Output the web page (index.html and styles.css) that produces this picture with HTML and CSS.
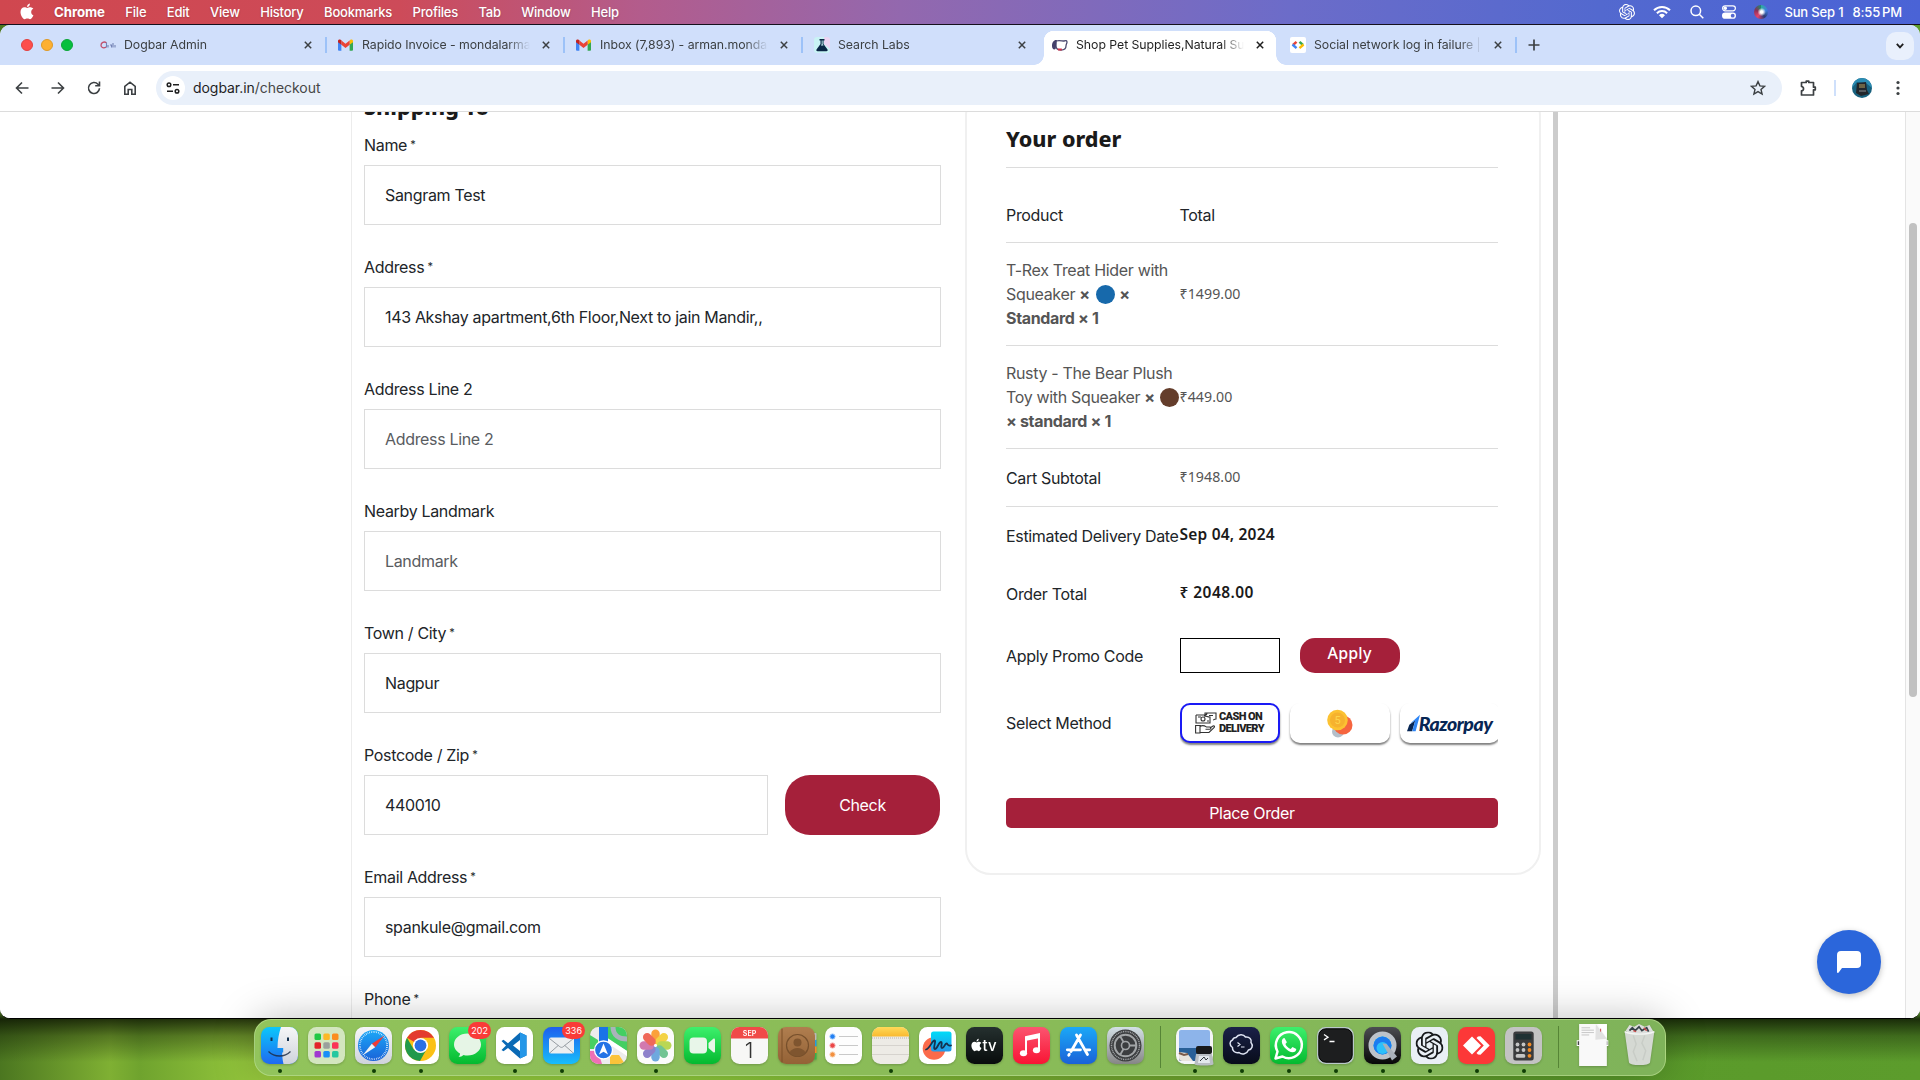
FILE: index.html
```html
<!DOCTYPE html>
<html lang="en">
<head>
<meta charset="utf-8">
<title>Shop Pet Supplies,Natural Supplements</title>
<link rel="stylesheet" href="styles.css">
</head>
<body>
<svg class="defs" width="0" height="0" aria-hidden="true">
  <defs>
    <linearGradient id="g-finder" x1="0" y1="0" x2="0" y2="1"><stop offset="0" stop-color="#0bc7fb"/><stop offset="1" stop-color="#1f6af0"/></linearGradient>
    <linearGradient id="g-white" x1="0" y1="0" x2="0" y2="1"><stop offset="0" stop-color="#f6f6f8"/><stop offset="1" stop-color="#cfd3dc"/></linearGradient>
    <linearGradient id="g-blue" x1="0" y1="0" x2="0" y2="1"><stop offset="0" stop-color="#1ba8f7"/><stop offset="1" stop-color="#1a62d8"/></linearGradient>
    <linearGradient id="g-mail" x1="0" y1="0" x2="0" y2="1"><stop offset="0" stop-color="#1e5fee"/><stop offset="1" stop-color="#18bdfb"/></linearGradient>
    <linearGradient id="g-green" x1="0" y1="0" x2="0" y2="1"><stop offset="0" stop-color="#3df06c"/><stop offset="1" stop-color="#04b92f"/></linearGradient>
    <linearGradient id="g-red" x1="0" y1="0" x2="0" y2="1"><stop offset="0" stop-color="#fb5570"/><stop offset="1" stop-color="#f91434"/></linearGradient>
    <linearGradient id="g-brown" x1="0" y1="0" x2="0" y2="1"><stop offset="0" stop-color="#b07e4f"/><stop offset="1" stop-color="#946236"/></linearGradient>
    <linearGradient id="g-yellow" x1="0" y1="0" x2="0" y2="1"><stop offset="0" stop-color="#ffda58"/><stop offset="1" stop-color="#f9b930"/></linearGradient>
    <linearGradient id="g-cyan" x1="0" y1="0" x2="0" y2="1"><stop offset="0" stop-color="#00dcf8"/><stop offset="1" stop-color="#2497e8"/></linearGradient>
    <linearGradient id="g-dark" x1="0" y1="0" x2="0" y2="1"><stop offset="0" stop-color="#25302f"/><stop offset="1" stop-color="#080c0c"/></linearGradient>
    <linearGradient id="g-navy" x1="0" y1="0" x2="0" y2="1"><stop offset="0" stop-color="#1a2148"/><stop offset="1" stop-color="#080c1a"/></linearGradient>
    <linearGradient id="g-steel" x1="0" y1="0" x2="0" y2="1"><stop offset="0" stop-color="#d3e0e6"/><stop offset="1" stop-color="#868686"/></linearGradient>
    <linearGradient id="g-qt" x1="0" y1="0" x2="0" y2="1"><stop offset="0" stop-color="#4c4d52"/><stop offset="1" stop-color="#070708"/></linearGradient>
    <symbol id="apple" viewBox="0 0 14 17"><path fill="#fff" d="M10.1 4.3c-1.200 0-2 .7-2.800.7-.8 0-1.700-.7-2.800-.7C2.300 4.300.5 6 .5 9.100c0 3.500 2.400 7.100 4.100 7.100 1 0 1.500-.7 2.800-.7s1.700.7 2.700.7c1.400 0 2.700-2.200 3.300-3.900-3-1.200-2.800-5.300-.1-6.500-.8-1-2-1.500-3.200-1.500zM9.900.4C8.200.7 6.900 2.200 7.100 4 8.700 4 10.100 2.300 9.900.4z"/></symbol>
    <symbol id="x" viewBox="0 0 8 8"><path d="M.8.8l6.400 6.400M7.200.8L.8 7.200" stroke="currentColor" stroke-width="1.500" fill="none"/></symbol>
    <symbol id="gmail" viewBox="0 0 16 12"><path fill="#4285f4" d="M0 1.500V11a1 1 0 0 0 1 1h2.600V4.800z"/><path fill="#34a853" d="M12.400 12H15a1 1 0 0 0 1-1V1.500l-3.600 3z"/><path fill="#fbbc04" d="M12.400 1.200v4.600L16 3V1.600C16 .2 14.300-.5 13.200.5z"/><path fill="#ea4335" d="M3.600 5.800V1.200L8 4.600l4.400-3.400v4.600L8 9.200z"/><path fill="#c5221f" d="M0 1.600V3l3.600 2.800V1.200L2.800.5C1.700-.4 0 .2 0 1.600z"/></symbol>
    <symbol id="knot" viewBox="0 0 24 24"><path fill="currentColor" d="M22.2819 9.8211a5.9847 5.9847 0 0 0-.5157-4.9108 6.0462 6.0462 0 0 0-6.5098-2.9A6.0651 6.0651 0 0 0 4.9807 4.1818a5.9847 5.9847 0 0 0-3.9977 2.9 6.0462 6.0462 0 0 0 .7427 7.0966 5.98 5.98 0 0 0 .511 4.9107 6.051 6.051 0 0 0 6.5146 2.9001A5.9847 5.9847 0 0 0 13.2599 24a6.0557 6.0557 0 0 0 5.7718-4.2058 5.9894 5.9894 0 0 0 3.9977-2.9001 6.0557 6.0557 0 0 0-.7475-7.0729zm-9.022 12.6081a4.4755 4.4755 0 0 1-2.8764-1.0408l.1419-.0804 4.7783-2.7582a.7948.7948 0 0 0 .3927-.6813v-6.7369l2.02 1.1686a.071.071 0 0 1 .038.052v5.5826a4.504 4.504 0 0 1-4.4945 4.4944zm-9.6607-4.1254a4.4708 4.4708 0 0 1-.5346-3.0137l.142.0852 4.783 2.7582a.7712.7712 0 0 0 .7806 0l5.8428-3.3685v2.3324a.0804.0804 0 0 1-.0332.0615L9.74 19.9502a4.4992 4.4992 0 0 1-6.1408-1.6464zM2.3408 7.8956a4.485 4.485 0 0 1 2.3655-1.9728V11.6a.7664.7664 0 0 0 .3879.6765l5.8144 3.3543-2.0201 1.1685a.0757.0757 0 0 1-.071 0l-4.8303-2.7865A4.504 4.504 0 0 1 2.3408 7.872zm16.5963 3.8558L13.1038 8.364 15.1192 7.2a.0757.0757 0 0 1 .071 0l4.8303 2.7913a4.4944 4.4944 0 0 1-.6765 8.1042v-5.6772a.79.79 0 0 0-.407-.667zm2.0107-3.0231l-.142-.0852-4.7735-2.7818a.7759.7759 0 0 0-.7854 0L9.409 9.2297V6.8974a.0662.0662 0 0 1 .0284-.0615l4.8303-2.7866a4.4992 4.4992 0 0 1 6.6802 4.66zM8.3065 12.863l-2.02-1.1638a.0804.0804 0 0 1-.038-.0567V6.0742a4.4992 4.4992 0 0 1 7.3757-3.4537l-.142.0805L8.704 5.459a.7948.7948 0 0 0-.3927.6813zm1.0976-2.3654l2.602-1.4998 2.6069 1.4998v2.9994l-2.5974 1.4997-2.6067-1.4997Z"/></symbol>
  </defs>
</svg>

<header class="menubar">
  <svg class="menubar-apple" width="14" height="17"><use href="#apple"/></svg>
  <nav class="menus"><b>Chrome</b><span>File</span><span>Edit</span><span>View</span><span>History</span><span>Bookmarks</span><span>Profiles</span><span>Tab</span><span>Window</span><span>Help</span></nav>
  <div class="status">
    <svg width="16" height="16"><use href="#knot"/></svg>
    <svg width="18" height="14" viewBox="0 0 18 14"><g fill="none" stroke="#fff" stroke-width="2"><path d="M1 5.200a11.500 11.500 0 0 1 16 0M3.900 8.200a7.300 7.300 0 0 1 10.200 0"/></g><path fill="#fff" d="M9 13.300L6 10.300a4.300 4.300 0 0 1 6 0z"/></svg>
    <svg width="14" height="14" viewBox="0 0 14 14"><g fill="none" stroke="#fff" stroke-width="1.500"><circle cx="5.800" cy="5.800" r="4.800"/><path d="M9.300 9.300l4 4"/></g></svg>
    <svg width="14" height="14" viewBox="0 0 14 14"><rect x=".6" y=".8" width="12.800" height="5" rx="2.500" fill="none" stroke="#fff" stroke-width="1.200"/><circle cx="3.300" cy="3.300" r="1.700" fill="#fff"/><rect y="7.600" width="14" height="6.200" rx="3.100" fill="#fff"/><circle cx="10.700" cy="10.700" r="1.900" fill="#5568cf"/></svg>
    <span class="siri"></span>
    <span class="clock">Sun Sep 1<i class="gap"></i>8:55<i></i>PM</span>
  </div>
</header>

<main class="window">
  <div class="tabstrip">
    <div class="lights"><i class="red"></i><i class="amber"></i><i class="green"></i></div>
    <div class="tab">
      <span class="fav"><svg width="16" height="8" viewBox="0 0 16 8"><path d="M6.500 1.800C4 0 1 1.500 1 4.200 1 7 4 7.500 6 6" fill="none" stroke="#c0506c" stroke-width="1.300"/><path d="M6.500 1.500v5M8 4v2.500M10 4h1.500v2.500M13 2v4.500M15 4v2.500" stroke="#7483b5" stroke-width="1.100" fill="none"/></svg></span>
      <span class="title">Dogbar Admin</span><svg class="close"><use href="#x"/></svg></div>
    <div class="tab"><span class="fav"><svg width="15" height="12"><use href="#gmail"/></svg></span><span class="title">Rapido Invoice - mondalarman</span><svg class="close"><use href="#x"/></svg></div>
    <div class="tab"><span class="fav"><svg width="15" height="12"><use href="#gmail"/></svg></span><span class="title">Inbox (7,893) - arman.mondal</span><svg class="close"><use href="#x"/></svg></div>
    <div class="tab last"><span class="fav"><svg width="16" height="16" viewBox="0 0 16 16"><rect width="16" height="16" rx="3" fill="#c9f3f5"/><path d="M10 0h3a3 3 0 0 1 3 3v9l-6-5z" fill="#ecd4f3"/><path d="M5.500 2h5v1.500h-1V7l4 5.500c.5 1-.1 1.700-1 1.700h-9c-.9 0-1.500-.7-1-1.700L6.500 7V3.500h-1z" fill="#0b2746"/><path d="M7.700 3.500h.9v3.700l1 1.400H6.800l.9-1.400z" fill="#c9f3f5"/></svg></span><span class="title">Search Labs</span><svg class="close"><use href="#x"/></svg></div>
    <div class="tab active"><span class="fav"><svg width="16" height="12" viewBox="0 0 16 12"><path d="M4 2c3-1 6 0 8 0 2-.5 3-.5 3 1s-1 2-1 4c0 2.500-2 4-5 4S4 10 4 7z" fill="#fff" stroke="#4b4a70" stroke-width="1.300"/><path d="M5 1C2 .5 0 3 0 7c0 3 2 4 3.500 3C4.500 9 3.500 4 5 1z" fill="#45416b"/><path d="M5.500 9.500h4.300V11.500H6z" fill="#d63047"/></svg></span><span class="title">Shop Pet Supplies,Natural Supp</span><svg class="close"><use href="#x"/></svg></div>
    <div class="tab"><span class="fav"><svg width="16" height="16" viewBox="0 0 16 16"><rect width="16" height="16" rx="2" fill="#fff"/><g fill="none" stroke-width="2.400"><path d="M6.500 4.800L3 8" stroke="#ea4335"/><path d="M2.500 7.500l4 3.700" stroke="#4285f4"/><path d="M9.500 4.800L13 8" stroke="#34a853"/><path d="M13.500 7.500l-4 3.700" stroke="#fbbc04"/></g></svg></span><span class="title">Social network log in failure | G</span><svg class="close"><use href="#x"/></svg></div>
    <svg class="newtab" width="12" height="12" viewBox="0 0 12 12"><path d="M6 .5v11M.5 6h11" stroke="#3c4043" stroke-width="1.700"/></svg>
    <span class="tabsearch"><svg width="8" height="6" viewBox="0 0 8 6"><path d="M.8.800L4 4.300 7.200.8" fill="none" stroke="#1f1f1f" stroke-width="1.800"/></svg></span>
  </div>

  <div class="toolbar">
    <div class="nav">
      <svg viewBox="0 0 16 16"><path d="M14.500 8H3M8 2.500L2.500 8 8 13.500"/></svg>
      <svg viewBox="0 0 16 16"><path d="M1.500 8H13M8 2.500L13.500 8 8 13.500"/></svg>
      <svg viewBox="0 0 16 16"><path d="M13.500 8.300A5.500 5.500 0 1 1 12 4.200l1.500 1.500M13.500 1.500v4.300H9.200"/></svg>
      <svg viewBox="0 0 16 16"><path d="M2.800 14.200V6.300L8 2.200l5.200 4.100v7.900H9.800V9.500H6.200v4.700z"/></svg>
    </div>
    <div class="omnibox">
      <span class="site"><svg width="14" height="12" viewBox="0 0 14 12"><g fill="none" stroke="#1f1f1f" stroke-width="1.500"><circle cx="3" cy="2.800" r="1.800"/><path d="M7 2.800h6M1 9.200h6"/><circle cx="11" cy="9.200" r="1.800"/></g></svg></span>
      <span class="url">dogbar.in<em>/checkout</em></span>
      <svg class="star" width="16" height="16" viewBox="0 0 16 16"><path d="M8 1.600l1.900 4.300 4.700.4-3.600 3.100 1.100 4.600L8 11.600 3.900 14 5 9.400 1.400 6.300l4.700-.4z" fill="none" stroke="#3c4043" stroke-width="1.400"/></svg>
    </div>
    <svg class="ext" width="17" height="18" viewBox="0 0 17 18"><path d="M1.500 3.500h4.700v-1.300h2.600v1.300h4.700v4.700h1.800v2.600h-1.800v5.200h-12v-4.200c2.700-.4 2.700-3.900 0-4.300z" fill="none" stroke="#3c4043" stroke-width="1.700" stroke-linejoin="round"/></svg>
    <i class="sep"></i>
    <svg class="avatar" width="20" height="20" viewBox="0 0 20 20"><circle cx="10" cy="10" r="10" fill="#17607d"/><path d="M0 10A10 10 0 0 1 20 10L14 5 5 4z" fill="#2b8cb3"/><path d="M5 5l9-1 1 8 2 4-8 2-5-3z" fill="#22262b"/><path d="M7 7h6M7 9h6" stroke="#b6a05e"/><path d="M7 13h7" stroke="#8b9095"/></svg>
    <svg class="dots" width="4" height="16" viewBox="0 0 4 16"><g fill="#3c4043"><circle cx="2" cy="2.500" r="1.600"/><circle cx="2" cy="8" r="1.600"/><circle cx="2" cy="13.500" r="1.600"/></g></svg>
  </div>

  <div class="viewport">
    <div class="page">
      <section class="shipping">
        <h2>Shipping To</h2>
        <div class="field"><label>Name <sup>*</sup></label><div class="input">Sangram Test</div></div>
        <div class="field"><label>Address <sup>*</sup></label><div class="input">143 Akshay apartment,6th Floor,Next to jain Mandir,,</div></div>
        <div class="field"><label>Address Line 2</label><div class="input hint">Address Line 2</div></div>
        <div class="field"><label>Nearby Landmark</label><div class="input hint">Landmark</div></div>
        <div class="field"><label>Town / City <sup>*</sup></label><div class="input">Nagpur</div></div>
        <div class="field"><label>Postcode / Zip <sup>*</sup></label><div class="zip"><div class="input">440010</div><div class="check">Check</div></div></div>
        <div class="field"><label>Email Address <sup>*</sup></label><div class="input">spankule@gmail.com</div></div>
        <div class="field"><label>Phone <sup>*</sup></label><div class="input"></div></div>
      </section>

      <section class="order">
        <h2>Your order</h2>
        <div class="row head"><span>Product</span><span>Total</span></div>
        <div class="row item"><span>T-Rex Treat Hider with<br>Squeaker <b>×</b> <i class="swatch blue"></i> <b>×<br>Standard × 1</b></span><span class="price">₹1499.00</span></div>
        <div class="row item"><span>Rusty - The Bear Plush<br>Toy with Squeaker <b>×</b> <i class="swatch brown"></i><br><b>× standard × 1</b></span><span class="price">₹449.00</span></div>
        <div class="row subtotal"><span>Cart Subtotal</span><span class="price">₹1948.00</span></div>
        <div class="row plain"><span>Estimated Delivery Date</span><strong>Sep 04, 2024</strong></div>
        <div class="row plain"><span>Order Total</span><strong class="total">₹ 2048.00</strong></div>
        <div class="row promo"><span>Apply Promo Code</span><div class="promo-form"><div class="promo-input"></div><div class="apply">Apply</div></div></div>
        <div class="row method"><span>Select Method</span>
          <div class="methods">
            <div class="pay selected">
              <svg width="22" height="22" viewBox="0 0 22 22"><g fill="none" stroke="#333" stroke-width="1.100"><path d="M10 4V1h11v6c-2 0-2 1-3 1M12 1c0 2-1 2-2 2M1 3h9M1 3v8h14V5c-3 0-3-1-6-1"/><path d="M3 5h3M12 9h2M14 3.500h4"/><circle cx="8" cy="7" r="2"/><path d="M.6 13.500H5v7.500H.6zM5 14.500c3-2 5-.5 6.500.5h3.500c1.500.5 1 2.300-.5 2.300h-4M15 16l3-2c1.500-.5 2 .7 1 1.700L14 20.500H5"/></g></svg>
              <span class="cod">CASH ON<br>DELIVERY</span>
            </div>
            <div class="pay"><svg width="26" height="30" viewBox="0 0 26 30"><circle cx="11" cy="23.500" r="6" fill="#b5bfca"/><circle cx="16" cy="17" r="9.500" fill="#f6653f"/><circle cx="10.500" cy="12" r="10.300" fill="#fcc232"/><circle cx="10.500" cy="12" r="7.500" fill="#f6b22e"/><text x="10.500" y="16" text-anchor="middle" font-family="Roboto,sans-serif" font-size="11" fill="#fdd54c">5</text></svg></div>
            <div class="pay razor"><svg width="13" height="18" viewBox="0 0 14 18"><path d="M0 18L2.500 11 9 6 5.500 18z" fill="#072654"/><path d="M3.500 9.500L14 0 9.300 18H5.700L8.800 6.500z" fill="#2f86f6"/></svg><span>Razorpay</span></div>
          </div>
        </div>
        <div class="place">Place Order</div>
      </section>
    </div>
    <div class="chat"><svg width="24" height="22" viewBox="0 0 24 22"><path d="M4 0h16a4 4 0 0 1 4 4v9a4 4 0 0 1-4 4H5l-3.300 4.500C1 22.300 0 22 0 21V4a4 4 0 0 1 4-4z" fill="#fff"/></svg></div>
    <div class="scrollbar"><i></i></div>
  </div>
</main>

<footer class="dock">
  <div class="app on"><svg viewBox="0 0 37 37"><rect width="37" height="37" rx="8.500" fill="url(#g-finder)"/><path d="M20 0h8.500A8.500 8.500 0 0 1 37 8.500v20A8.500 8.500 0 0 1 28.500 37H22.500c-1-4-1.300-8-1.300-11.500h1V21H16.500C16.500 13 18 6 20 0z" fill="url(#g-white)"/><path d="M10.500 10.500v3.500M27 10.500v3.500" stroke="#14304e" stroke-width="2"/><path d="M7.500 24.500c6 6 16 6 22 0" fill="none" stroke="#1d2c45" stroke-width="1.300" stroke-opacity=".85"/></svg></div>
  <div class="app"><svg viewBox="0 0 37 37"><rect width="37" height="37" rx="8.500" fill="#d3e6bf"/><g><rect x="6.500" y="6.500" width="6.500" height="6.500" rx="1.500" fill="#22c745"/><rect x="15.300" y="6.500" width="6.500" height="6.500" rx="1.500" fill="#fcb827"/><rect x="24" y="6.500" width="6.500" height="6.500" rx="1.500" fill="#fb8c1e"/><rect x="6.500" y="15.300" width="6.500" height="6.500" rx="1.500" fill="#e3232a"/><rect x="15.300" y="15.300" width="6.500" height="6.500" rx="1.500" fill="#9aa09c"/><rect x="24" y="15.300" width="6.500" height="6.500" rx="1.500" fill="#fb3556"/><rect x="6.500" y="24" width="6.500" height="6.500" rx="1.500" fill="#a03ad0"/><rect x="15.300" y="24" width="6.500" height="6.500" rx="1.500" fill="#188ef7"/><rect x="24" y="24" width="6.500" height="6.500" rx="1.500" fill="#24c8a0"/></g></svg></div>
  <div class="app on"><svg viewBox="0 0 37 37"><rect width="37" height="37" rx="8.500" fill="url(#g-white)"/><circle cx="18.500" cy="18.500" r="15.500" fill="url(#g-blue)"/><circle cx="18.500" cy="18.500" r="13.600" fill="none" stroke="#fff" stroke-width="1.800" stroke-dasharray=".6 1.200"/><path d="M29.500 8.500L16.800 16.800l3.400 3.400z" fill="#f03b35"/><path d="M7.500 28.500l9.300-11.700 3.400 3.400z" fill="#f3f3f3"/></svg></div>
  <div class="app on"><svg viewBox="0 0 37 37"><rect width="37" height="37" rx="8.500" fill="#fff"/><circle cx="18.500" cy="18.500" r="15.500" fill="#fbc116"/><path d="M18.500 18.500L5 10.800A15.500 15.500 0 0 1 32 10.800H18.500z" fill="#e33b2e"/><path d="M5 10.800A15.500 15.500 0 0 0 18 34l6.700-11.900-12.900.3z" fill="#21994b"/><circle cx="18.500" cy="18.500" r="7.600" fill="#fff"/><circle cx="18.500" cy="18.500" r="5.900" fill="#2a6fe3"/></svg></div>
  <div class="app"><svg viewBox="0 0 37 37"><rect width="37" height="37" rx="8.500" fill="url(#g-green)"/><path d="M18.500 6.500c7.500 0 13.500 4.700 13.500 11s-6 11-13.500 11c-1.400 0-2.700-.1-4-.5-1.200 1.200-3 2-5 2 1-1 1.600-2.300 1.500-3.500C7.500 24.500 5 21.300 5 17.500c0-6.300 6-11 13.500-11z" fill="#e6f5e6"/></svg><em>202</em></div>
  <div class="app on"><svg viewBox="0 0 37 37"><rect width="37" height="37" rx="8.500" fill="#fff"/><path d="M24 5.500L12 16.200 7.500 12.800 5.500 14l4.500 4.500L5.500 23l2 1.300 4.500-3.400L24 31.500l6.500-3v-20zM24 13v11l-7-5.500z" fill="#0a6ab6" fill-rule="evenodd"/><path d="M24 5.500v26l6.500-3v-20z" fill="#2597e8"/></svg></div>
  <div class="app on"><svg viewBox="0 0 37 37"><rect width="37" height="37" rx="8.500" fill="url(#g-mail)"/><rect x="6" y="10.500" width="25" height="16" rx="2" fill="#eceef0"/><path d="M6.500 11.500l10.300 8.200c1.200.9 2.300.9 3.400 0l10.300-8.200M6.700 26l8.500-7.500M30.300 26l-8.500-7.500" fill="none" stroke="#8c9298" stroke-width=".9"/></svg><em>336</em></div>
  <div class="app"><svg viewBox="0 0 37 37"><clipPath id="mapc"><rect width="37" height="37" rx="8.500"/></clipPath><g clip-path="url(#mapc)"><path fill="#ececec" d="M0 0h37v37H0z"/><path d="M18 0h19v24L18 12z" fill="#43cf62"/><path d="M0 8l8 5v9H0z" fill="#47cf63"/><path d="M0 24h8l4 13H0z" fill="#ee70b5"/><path d="M20 28l9 0 6 9H20z" fill="#fbc33a"/><path d="M23 0c0 8 6 12 14 12" fill="none" stroke="#a9b3ba" stroke-width="5"/><path d="M16 10l21 14v5L16 15z" fill="#fff"/><path d="M9 0h9v18H9z" fill="#1a74e8"/></g><circle cx="13.500" cy="23" r="9" fill="#2373e6" stroke="#fff" stroke-width="1.300"/><path d="M13.500 16.500l4.500 11-4.500-2.700L9 27.500z" fill="#fff"/></svg></div>
  <div class="app on"><svg viewBox="0 0 37 37"><rect width="37" height="37" rx="8.500" fill="#fbfbfb"/><g opacity=".92"><rect x="14.300" y="2.500" width="8.400" height="14.500" rx="4.200" fill="#fb9a2b"/><rect x="14.300" y="2.500" width="8.400" height="14.500" rx="4.200" fill="#f3cf35" transform="rotate(45 18.500 18.500)"/><rect x="14.300" y="2.500" width="8.400" height="14.500" rx="4.200" fill="#b5d446" transform="rotate(90 18.500 18.500)"/><rect x="14.300" y="2.500" width="8.400" height="14.500" rx="4.200" fill="#67c08c" transform="rotate(135 18.500 18.500)"/><rect x="14.300" y="2.500" width="8.400" height="14.500" rx="4.200" fill="#63a2dc" transform="rotate(180 18.500 18.500)"/><rect x="14.300" y="2.500" width="8.400" height="14.500" rx="4.200" fill="#8577c8" transform="rotate(225 18.500 18.500)"/><rect x="14.300" y="2.500" width="8.400" height="14.500" rx="4.200" fill="#cf6fa8" transform="rotate(270 18.500 18.500)"/><rect x="14.300" y="2.500" width="8.400" height="14.500" rx="4.200" fill="#ef5c4c" transform="rotate(315 18.500 18.500)"/></g></svg></div>
  <div class="app"><svg viewBox="0 0 37 37"><rect width="37" height="37" rx="8.500" fill="url(#g-green)"/><rect x="5.500" y="10.500" width="17.500" height="16" rx="4" fill="#e8f6e9"/><path d="M24.500 16l4.800-4.200c.9-.7 1.700-.3 1.700.7v12c0 1-.8 1.400-1.700.7L24.500 21z" fill="#e8f6e9"/></svg></div>
  <div class="app"><svg viewBox="0 0 37 37"><rect width="37" height="37" rx="8.500" fill="#f7f7f6"/><path d="M0 11.500v-3A8.500 8.500 0 0 1 8.500 0h20A8.500 8.500 0 0 1 37 8.500v3z" fill="#f04a48"/><text x="18.500" y="8.800" text-anchor="middle" font-family="Inter,sans-serif" font-weight="600" font-size="7" fill="#fff">SEP</text><text x="18" y="30.500" text-anchor="middle" font-family="Inter,sans-serif" font-weight="300" font-size="22" fill="#333">1</text></svg></div>
  <div class="app"><svg viewBox="0 0 37 37"><rect x="30" y="6" width="8.500" height="7" rx="1" fill="#b9b9b9"/><rect x="30" y="13" width="8.500" height="6.500" fill="#249de0"/><rect x="30" y="19.500" width="8.500" height="6.500" fill="#f38b25"/><rect x="30" y="26" width="8.500" height="6.500" fill="#38b24a"/><rect width="37" height="37" rx="8.500" fill="url(#g-brown)"/><path d="M4 1.500v34" stroke="#7c5028" stroke-width="1"/><g fill="none" stroke="#77502c" stroke-width="1.200"><circle cx="19.500" cy="18.500" r="11"/></g><circle cx="19.500" cy="15.500" r="4" fill="#7f552f"/><path d="M11.500 25.500c3-6 13-6 16 0-4 5-12 5-16 0z" fill="#7f552f"/></svg></div>
  <div class="app"><svg viewBox="0 0 37 37"><rect width="37" height="37" rx="8.500" fill="#fdfdfd"/><g stroke="#c9c9c9"><path d="M14 9.500h19M14 18.500h19M14 27.500h19"/></g><g stroke-width="1" fill-opacity=".95"><circle cx="7.500" cy="9.500" r="2.600" fill="#1679f2" stroke="#9cc6fa"/><circle cx="7.500" cy="18.500" r="2.600" fill="#ea3c3c" stroke="#f5aaaa"/><circle cx="7.500" cy="27.500" r="2.600" fill="#f28a35" stroke="#f9cfab"/></g></svg></div>
  <div class="app on"><svg viewBox="0 0 37 37"><rect width="37" height="37" rx="8.500" fill="#edebe6"/><path d="M0 9.500v-1A8.500 8.500 0 0 1 8.500 0h20A8.500 8.500 0 0 1 37 8.500v1z" fill="url(#g-yellow)"/><path d="M0 11h37" stroke="#a9a69e" stroke-dasharray="1 1" stroke-width=".8"/><path d="M0 18.500h37M0 27.500h37" stroke="#cfcdc8" stroke-width=".8"/></svg></div>
  <div class="app"><svg viewBox="0 0 37 37"><rect width="37" height="37" rx="8.500" fill="#fff"/><circle cx="15" cy="21.500" r="11.300" fill="#fb6a4b"/><rect x="12" y="4.500" width="20.500" height="20" rx="2.500" fill="url(#g-cyan)"/><path d="M7 22.500c4-1 6-9 8.500-9 2 0-2 8.500.5 8.500s3.500-7 6-7c2 0-1 6 1 6 2.500 0 2.500-4.500 4.500-4.500 1.500 0 .5 3 4.500 2" fill="none" stroke="#15314f" stroke-width="1.800" stroke-linecap="round"/></svg></div>
  <div class="app"><svg viewBox="0 0 37 37"><rect width="37" height="37" rx="8.500" fill="url(#g-dark)"/><g transform="translate(5 11.500) scale(.78)"><path fill="#fff" d="M10.100 4.300c-1.200 0-2 .7-2.800.7-.8 0-1.700-.7-2.800-.7C2.300 4.300.5 6 .5 9.100c0 3.500 2.400 7.100 4.100 7.100 1 0 1.500-.7 2.800-.7s1.700.7 2.700.7c1.400 0 2.700-2.200 3.300-3.900-3-1.200-2.800-5.300-.1-6.500-.8-1-2-1.500-3.200-1.500zM9.900.4C8.200.7 6.900 2.200 7.100 4 8.700 4 10.100 2.300 9.900.4z"/></g><text x="16.500" y="24" font-family="Inter,sans-serif" font-weight="500" font-size="15" fill="#fff">tv</text></svg></div>
  <div class="app"><svg viewBox="0 0 37 37"><rect width="37" height="37" rx="8.500" fill="url(#g-red)"/><path d="M13 11v14.500M26 8v14.500" stroke="#fff" stroke-width="2"/><path d="M12 9.300L27 6v5L12 14z" fill="#fff"/><ellipse cx="10.500" cy="26.300" rx="3.600" ry="3" fill="#fff"/><ellipse cx="23.500" cy="23.300" rx="3.600" ry="3" fill="#fff"/></svg></div>
  <div class="app"><svg viewBox="0 0 37 37"><rect width="37" height="37" rx="8.500" fill="url(#g-blue)"/><g stroke="#fff" stroke-width="2.800" stroke-linecap="round" fill="none"><path d="M20.500 8L11 24.500M16.500 8L27.500 27.500M7.300 22.800h13.200M25.500 22.800h4.200M9.300 27.300l-.6 1"/></g></svg></div>
  <div class="app"><svg viewBox="0 0 37 37"><rect width="37" height="37" rx="8.500" fill="url(#g-steel)"/><circle cx="18.500" cy="18.500" r="16" fill="#3b3d3f"/><g fill="none" stroke="#a2a5a7"><circle cx="18.500" cy="18.500" r="14" stroke-width="1.500" stroke-dasharray="1 .8"/><circle cx="18.500" cy="18.500" r="10.800" stroke-width="2"/><circle cx="18.500" cy="18.500" r="4" stroke-width="1.600"/><path d="M16.500 15L13 9M16.500 22L13 28M22.500 18.500h7" stroke-width="1.800"/></g></svg></div>
  <i class="divider"></i>
  <div class="app on"><svg viewBox="0 0 37 37"><rect width="37" height="37" rx="8.500" fill="#f4f5f7"/><path d="M5 3h27a2 2 0 0 1 2 2v17H3V5a2 2 0 0 1 2-2z" fill="#8db4ea"/><path d="M3 21h31v13H5a2 2 0 0 1-2-2z" fill="#285f98"/><path d="M3 25l8 1 6 8H6a3 3 0 0 1-3-3z" fill="#e9e3dc"/><path d="M3 26l5 2 4-1" stroke="#7b5a4a" stroke-width="2" fill="none"/><rect x="20" y="19" width="16" height="8" rx="2" fill="#18191b"/><path d="M20 27h16l1.500 10c0 2-19 2-19 0z" fill="#b9bec3"/><path d="M23 29h10l1 7H22z" fill="#e2e8ec"/><path d="M24 34l4-4 2 3 2-2" stroke="#33383c" fill="none"/></svg></div>
  <div class="app on"><svg viewBox="0 0 37 37"><rect width="37" height="37" rx="8.500" fill="url(#g-navy)"/><path d="M13 10.500c2.500-3.500 7.500-3.500 9.500-.5 4-.5 6.500 2.500 5.500 5.500 2.500 3 1 7-2.500 7.500-1.500 4-6.500 5-9.500 2.500-4 1-7-2-6.500-5C6 18 6.500 14 9.500 13c.5-1.500 2-2.500 3.500-2.500z" fill="none" stroke="#dfe4f3" stroke-width="1.500"/><path d="M14.500 15.500l2.500 2-2.500 2M18 20h3.500" fill="none" stroke="#dfe4f3" stroke-width="1.200"/></svg></div>
  <div class="app on"><svg viewBox="0 0 37 37"><rect width="37" height="37" rx="8.500" fill="url(#g-green)"/><path d="M5.500 31.500l2-7A13 13 0 1 1 12.500 29.500z" fill="none" stroke="#fff" stroke-width="2.500" stroke-linejoin="round"/><path d="M14.500 11c-1.500 0-2.700 1.700-2.700 3.500 0 4.500 6.500 10.800 10.800 10.800 2 0 3.700-1.300 3.700-3.300L22.500 20l-1.800 2c-2.300-.8-4.300-2.700-5.300-5l1.500-1.700z" fill="#fff"/></svg></div>
  <div class="app on"><svg viewBox="0 0 37 37"><rect width="37" height="37" rx="8.500" fill="#b9c8c8"/><rect x="1.800" y="1.800" width="33.400" height="33.400" rx="7" fill="#1d1e1f" stroke="#000" stroke-width="1"/><path d="M7 7.500l4 2.700-4 2.700M12.500 14.500h5" stroke="#fff" stroke-width="1.300" fill="none"/></svg></div>
  <div class="app on"><svg viewBox="0 0 37 37"><rect width="37" height="37" rx="8.500" fill="url(#g-qt)"/><circle cx="18.500" cy="18.500" r="11.500" fill="url(#g-cyan)" stroke="#bcc2ca" stroke-width="5"/><circle cx="18.500" cy="18.500" r="9" fill="#1c7bf0"/><circle cx="18.500" cy="21" r="6" fill="#2cc0fa"/><path d="M18.500 16.500l4 .5 10.500 12.500-5 4z" fill="#a9b0ba"/></svg></div>
  <div class="app on"><svg viewBox="0 0 37 37" color="#17191c"><rect width="37" height="37" rx="8.500" fill="#e9eff5"/><use href="#knot" x="4.500" y="4.500" width="28" height="28"/></svg></div>
  <div class="app on"><svg viewBox="0 0 37 37"><rect width="37" height="37" rx="8.500" fill="#fc3838"/><path d="M5 18.500l9-9 9 9-9 9z" fill="#fff"/><path d="M20 9.500l2.500-.2 9.200 9.200-9.200 9.200-2.500-.2L18.500 26l7.300-7.500L18.500 11z" fill="#fff"/></svg></div>
  <div class="app on"><svg viewBox="0 0 37 37"><rect width="37" height="37" rx="8.500" fill="#c3c3c3"/><rect x="8.300" y="4.500" width="20.400" height="29" rx="2.500" fill="#3a3b3d"/><rect x="10.500" y="7" width="16" height="5.500" fill="#1f3133"/><g fill="#c5c5c5"><circle cx="12.500" cy="17.500" r="1.900"/><circle cx="18.500" cy="17.500" r="1.900"/><circle cx="12.500" cy="23" r="1.900"/><circle cx="18.500" cy="23" r="1.900"/><rect x="10.600" y="27" width="9.800" height="3.800" rx="1.900"/></g><g fill="#f28a24"><circle cx="24.500" cy="17.500" r="1.900"/><circle cx="24.500" cy="23" r="1.900"/><circle cx="24.500" cy="28.800" r="1.900"/></g></svg></div>
  <i class="divider"></i>
  <div class="app"><svg class="tall" viewBox="0 0 37 46"><path d="M2 18h33v6H2z" fill="#fff"/><path d="M3 19h3v4H3zM31 19h3v4h-3z" fill="#454545"/><path d="M4.500 1h29v44h-29z" fill="#f9f9f9"/><path d="M22 1l-.5 16.500 12-1z" fill="#e1e1e1"/><path d="M24 1h9.500v15z" fill="#fff"/><path d="M7 5h9M7 7.500h13M7 10h13M7 12.500h8" stroke="#b8b8b8" stroke-width=".8"/><path d="M27 6v3" stroke="#c44"/></svg></div>
  <div class="app"><svg class="tall" viewBox="0 0 37 46"><path d="M4 8l4-6 5 2 5-3 6 3 5-2 4 7-8 5H11z" fill="#dcdedc"/><path d="M8 8l3-3 3 3 4-4 3 4 5-3 2 4" stroke="#37444a" stroke-width="1.800" fill="none"/><path d="M12 8l3 1M23 5l3 3" stroke="#cc4b4b" stroke-width="1.500"/><path d="M3 9c7 3 24 3 31 0l-4.500 32c-.5 4-21.500 4-22 0z" fill="#d5d9d3"/><path d="M12 13l3 9-3 8 4 10M24 13l-3 8 4 8-3 10" stroke="#c8ccc6" stroke-width="1.500" fill="none"/><path d="M3 9c7 3.500 24 3.500 31 0" stroke="#f4f6f4" stroke-width="1.500" fill="none"/></svg></div>
</footer>
</body>
</html>
```

FILE: styles.css
```css
* { box-sizing: border-box; }

body {
  margin: 0;
  width: 1920px;
  height: 1080px;
  overflow: hidden;
  display: flex;
  flex-direction: column;
  font-family: Inter, "Noto Sans", sans-serif;
  color: #1f1f1f;
  background:
    linear-gradient(180deg, rgba(0, 0, 0, 0) 1012px, rgba(8, 14, 0, .78) 1019px, rgba(8, 14, 0, .35) 1036px, rgba(0, 0, 0, 0) 1062px),
    linear-gradient(90deg, #4b7620 0, #7fb033 110px, #6fa32e 140px, #9ed040 280px, #8fcb3c 700px, #74a930 1100px, #5a9a2a 1600px, #5c9c2c 1920px);
}

svg { display: block; flex: none; }
i, em { font-style: normal; }
.defs { position: absolute; }

/* menu bar */
.menubar {
  height: 25px;
  flex: none;
  display: flex;
  align-items: center;
  padding: 0 18px 1px 20px;
  color: #fff;
  font-size: 13px;
  font-weight: 500;
  border-bottom: 1px solid #15101c;
  background: linear-gradient(90deg, #d0474f 0, #cd4b59 400px, #b35c8c 640px, #9368ae 900px, #6c6cc9 1290px, #5369cf 1600px, #4a63d6 1920px);
}
.menubar-apple { margin: -1px 20px 0 0; }
.menus { display: flex; align-items: baseline; gap: 20.500px; letter-spacing: -.22px; text-shadow: 0 1px 2px rgba(0, 0, 0, .2); }
.menus b { font-size: 13.300px; letter-spacing: -.1px; font-weight: 700; }
.status { margin-left: auto; display: flex; align-items: center; }
.status svg { margin-right: 18px; }
.status svg:nth-child(2) { margin-right: 19px; }
.siri { width: 14px; height: 14px; margin-right: 16px; border-radius: 50%; background: radial-gradient(circle at 55% 50%, #fff 0 12%, transparent 40%), conic-gradient(#2fae9c, #3f7de0, #2b3a70, #e2456e, #8c2f58, #1d8a70); }
.clock { letter-spacing: -.15px; white-space: nowrap; }
.clock i { display: inline-block; width: 2px; }
.clock .gap { width: 9px; }

/* browser window */
.window {
  height: 994px;
  flex: none;
  display: flex;
  flex-direction: column;
  overflow: hidden;
  border-radius: 10px;
  background: #fff;
  border-bottom: 1px solid #000;
}

.tabstrip { height: 40px; flex: none; display: flex; align-items: center; background: #d0dffb; }
.lights { width: 89px; display: flex; gap: 8px; padding-left: 21px; }
.lights i { width: 12px; height: 12px; border-radius: 50%; }
.red { background: #fd4e4b; border: 1px solid #e2413f; }
.amber { background: #fdb032; border: 1px solid #de9a27; }
.green { background: #07bf3f; border: 1px solid #0ba537; }

.tab { width: 238px; height: 34px; flex: none; display: flex; align-items: center; padding-left: 10px; font-size: 12.300px; color: #3c4043; background: linear-gradient(#9dc2f8, #9dc2f8) right center / 2px 16px no-repeat; }
.tab.last { background: none; }
.tab .fav { width: 17px; flex: none; display: flex; justify-content: center; margin-right: 8px; }
.tab .title { width: 170px; flex: none; margin-right: 10px; padding-bottom: 1px; overflow: hidden; white-space: nowrap; letter-spacing: -.05px; mask-image: linear-gradient(90deg, #000 145px, transparent 168px); }
.close { width: 8px; height: 8px; }
.tab.active {
  width: 252px;
  margin: 6px -7px 0;
  padding: 0;
  color: #1f1f1f;
  background: linear-gradient(#fff, #fff) 10px 10px / 232px 24px no-repeat, radial-gradient(circle at 20px 10px, #fff 10px, transparent 10.500px), radial-gradient(circle at 232px 10px, #fff 10px, transparent 10.500px), linear-gradient(#fff, #fff) 20px 0 / 212px 10px no-repeat;
}
.tab.active .fav { margin-left: 7px; }
.tab.active .fav, .tab.active .title, .tab.active .close { margin-bottom: 6px; }
.tab.active::before, .tab.active::after { content: ""; width: 10px; height: 10px; align-self: flex-end; flex: none; }
.tab.active::before { background: radial-gradient(circle at 0 0, transparent 9.500px, #fff 10px); }
.tab.active::after { margin-left: auto; background: radial-gradient(circle at 100% 0, transparent 9.500px, #fff 10px); }
.newtab { margin-left: 11px; }
.tabsearch { width: 28px; height: 28px; margin: 2px 6px 0 auto; display: grid; place-items: center; border-radius: 10px; background: #e9f0fc; }

.toolbar { height: 47px; flex: none; display: flex; align-items: center; background: #fff; border-bottom: 1px solid #dcdcdc; padding-left: 14px; }
.nav { display: flex; gap: 20px; width: 142px; }
.nav svg { width: 16px; height: 16px; fill: none; stroke: #3c4043; stroke-width: 1.600; }
.omnibox { width: 1626px; height: 34px; flex: none; display: flex; align-items: center; padding: 0 16px 0 5px; border-radius: 17px; background: #e9f0fa; }
.site { width: 24px; height: 24px; margin-right: 8px; display: grid; place-items: center; border-radius: 50%; background: #fff; }
.url { font-size: 14px; letter-spacing: -.05px; padding-bottom: 1px; color: #1f1f1f; }
.url em { color: #474747; }
.star { margin-left: auto; }
.ext { margin-left: 18px; }
.sep { width: 2px; height: 16px; margin: 0 16px 0 17px; background: #cfe0fb; }
.avatar { margin-right: 24px; }

/* page */
.viewport { flex: 1; min-height: 0; display: flex; overflow: hidden; background: #fff; }
.page { width: 1207px; margin-left: 351px; height: 100%; display: flex; align-items: flex-start; border-left: 1px solid #ececec; border-right: 5px solid #ccc; font-size: 16px; letter-spacing: -.33px; overflow: hidden; }
.page h2 { margin: 0; font-family: "Noto Sans", sans-serif; font-weight: 800; font-size: 21.500px; letter-spacing: 0; color: #1a1a1a; }

.shipping { width: 577px; margin-left: 12px; flex: none; }
.shipping h2 { height: 43px; line-height: 34px; margin-top: -22px; }
.field { height: 122px; }
.field label { display: block; height: 32px; line-height: 24px; color: #212529; }
.field sup { font-size: 11px; line-height: 0; vertical-align: 3px; margin-left: -1px; }
.input { height: 60px; line-height: 58px; padding-left: 20px; border: 1px solid #dcdcdc; color: #212529; background: #fff; }
.hint { color: #595c5f; }
.zip { display: flex; gap: 17px; }
.zip .input { width: 404px; }
.check { width: 155px; height: 60px; line-height: 60px; text-align: center; color: #fff; background: #a5203a; border-radius: 25px; }

.order { width: 576px; height: 785px; flex: none; margin: -22px 0 0 24px; padding: 27px 41px 0 39px; border: 2px solid #f0f0f0; border-radius: 26px; }
.order h2 { height: 49px; line-height: 39px; margin-bottom: 20px; border-bottom: 1px solid #dcdcdc; }
.row { display: grid; grid-template-columns: 173.500px minmax(0, 1fr); align-items: center; white-space: nowrap; color: #212529; }
.head { height: 55px; border-bottom: 1px solid #dcdcdc; }
.item { height: 103px; line-height: 24px; color: #555; border-bottom: 1px solid #dcdcdc; }
.item b { font-weight: 700; }
.subtotal { height: 58px; border-bottom: 1px solid #dcdcdc; }
.subtotal .price { padding-bottom: 2px; }
.plain { height: 58px; }
.price { font-family: "Noto Sans", sans-serif; font-size: 14.200px; color: #555; letter-spacing: .05px; }
.row strong { font-family: "Noto Sans", sans-serif; font-weight: 600; font-size: 15.500px; color: #1a1a1a; letter-spacing: .2px; margin-top: -5px; }
.row .total { letter-spacing: .45px; }
.swatch { display: inline-block; width: 19px; height: 19px; margin-left: 2px; border-radius: 50%; vertical-align: -4px; }
.blue { background: #1769ab; }
.brown { background: #643d2b; margin-left: 1px; }

.promo { height: 66px; }
.promo-form { display: flex; gap: 20px; margin-top: -2px; }
.promo-input { width: 100px; height: 35px; border: 1px solid #000; }
.apply { width: 100px; height: 35px; line-height: 31px; text-align: center; color: #fff; font-family: "Noto Sans", sans-serif; font-weight: 500; letter-spacing: .2px; background: #a5203a; border-radius: 15px; }

.method { height: 68px; }
.methods { height: 50px; padding-top: 5px; display: flex; gap: 10px; overflow: hidden; }
.pay { width: 100px; height: 40px; flex: none; display: flex; align-items: center; justify-content: center; border-radius: 10px; box-shadow: 0 2px 2px rgba(0, 0, 0, .5); background: #fff; }
.selected { border: 2px solid #1a1af5; gap: 2px; }
.cod { font: 900 11px/12px Roboto, sans-serif; letter-spacing: -.6px; color: #222; }
.razor span { font: italic 900 19.500px/20px Lato, sans-serif; letter-spacing: -.5px; color: #072654; margin-left: -1px; padding-top: 2px; }

.place { height: 30px; line-height: 30px; margin-top: 41px; text-align: center; color: #fff; background: #a5203a; border-radius: 5px; }

.chat { width: 64px; height: 64px; margin: 818px 24px 0 auto; display: grid; place-items: center; flex: none; border-radius: 50%; background: #2b66db; box-shadow: 0 2px 6px rgba(0, 0, 0, .25); }
.scrollbar { width: 15px; flex: none; border-left: 1px solid #e4e4e4; background: #fafafa; padding: 111px 0 0 3px; }
.scrollbar i { display: block; width: 8px; height: 474px; border-radius: 4px; background: #c1c1c1; }

/* dock */
.dock {
  position: relative;
  width: 1412px;
  height: 57px;
  flex: none;
  margin: 0 0 0 254px;
  padding: 7px 0 0 6px;
  display: flex;
  gap: 10px;
  border-radius: 17px;
  border: 1px solid rgba(190, 225, 150, .6);
  background: linear-gradient(90deg, #92c45c 0, #8dbe58 300px, #89bb58 800px, #7fb35a 1400px);
  box-shadow: 0 0 42px rgba(0, 0, 0, .26);
}
.app { position: relative; width: 37px; height: 46px; flex: none; }
.app svg { width: 37px; height: 37px; overflow: visible; filter: drop-shadow(0 1px 1px rgba(0, 0, 0, .2)); }
.app svg.tall { height: 44px; margin-top: -4px; }
.app.on::after { content: ""; display: block; width: 4px; height: 4px; margin: 5px auto 0; border-radius: 50%; background: #0f3d05; }
.app em { position: absolute; top: -5px; right: -5px; height: 17px; padding: 0 3px; border-radius: 9px; background: #f93b38; color: #fff; font-size: 9px; line-height: 17px; }
.divider { width: 1px; height: 42px; margin: -1px 5px 0 6px; background: #568536; flex: none; }
```
